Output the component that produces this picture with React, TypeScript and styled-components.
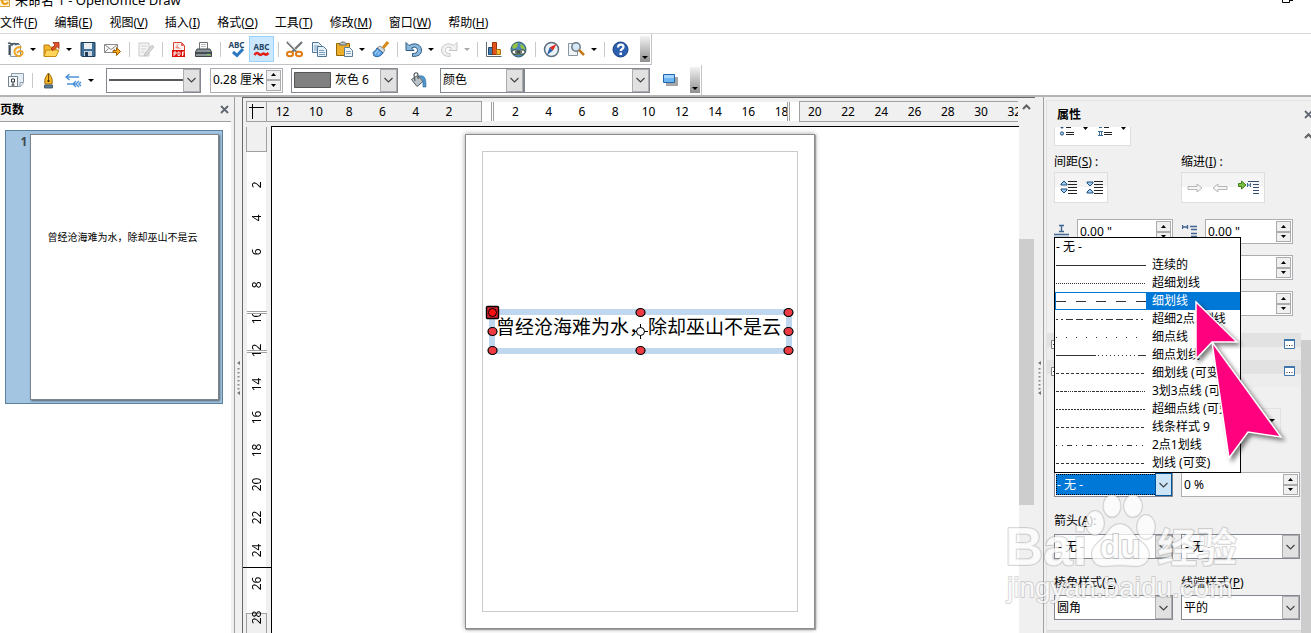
import React from "react";
import styled, { createGlobalStyle, css } from "styled-components";

const GlobalStyle = createGlobalStyle`
  * { box-sizing: border-box; }
  html, body, #root { height: 100%; }
  body { margin: 0; overflow: hidden; background: #fff; }
  body, button, input, select {
    font-family: "Noto Sans", "Noto Sans CJK SC", sans-serif;
    font-size: 12px;
    line-height: 16px;
    color: #000;
  }
  button { padding: 0; border: 0; background: none; }
  svg { display: block; flex: none; }
`;

/* ---------- window frame ---------- */

const Window = styled.div`
  display: flex;
  flex-direction: column;
  height: 100vh;
  overflow: hidden;
`;

const TitleBar = styled.header`
  display: flex;
  align-items: flex-end;
  justify-content: space-between;
  height: 8px;
  padding-right: 18px;
`;

const TitleText = styled.div`
  display: flex;
  align-items: flex-end;
  gap: 5px;
  white-space: nowrap;
  font-size: 13px;
`;

const RestoreButton = styled.button`
  display: flex;
  align-self: flex-start;
`;

const MenuBar = styled.nav`
  display: flex;
  gap: 17px;
  height: 26px;
  align-items: center;
  padding-top: 4px;
  border-bottom: 1px solid #d8d8da;
`;

const MenuItem = styled.button`
  white-space: nowrap;
`;

const ToolBar = styled.div<{ $last?: boolean }>`
  display: flex;
  align-items: center;
  align-self: flex-start;
  height: ${(p) => (p.$last ? 30 : 31)}px;
  padding-left: 3px;
  padding-right: 1px;
  border-right: 1px solid #c4c4c8;
  border-bottom: ${(p) => (p.$last ? "0" : "1px solid #c4c4c8")};
`;

const ToolButton = styled.button<{ $active?: boolean }>`
  display: flex;
  align-items: center;
  justify-content: center;
  width: 25px;
  height: 26px;
  ${(p) =>
    p.$active &&
    css`
      background: #cce8ff;
      border: 1px solid #99d1ff;
    `}
`;

const SplitButton = styled.button`
  display: flex;
  align-items: center;
  width: 36px;
  height: 26px;
  padding-left: 4px;
  gap: 6px;
`;

const Separator = styled.span`
  width: 8px;
  height: 15px;
  flex: none;
  background: linear-gradient(#c9c9c9, #c9c9c9) 4px 0 / 1px 100% no-repeat;
`;

const Grip = styled.button`
  display: flex;
  align-items: flex-end;
  justify-content: center;
  width: 10px;
  height: 26px;
  margin-left: 7px;
  padding-bottom: 3px;
  background: linear-gradient(#f2f2f2, #8f8f8f);
`;

/* ---------- form controls ---------- */

const ComboBox = styled.div<{ $width?: number }>`
  position: relative;
  display: flex;
  width: ${(p) => (p.$width ? p.$width + "px" : "100%")};
  height: 25px;
`;

const ComboSelect = styled.select<{ $indent?: number; $selected?: boolean }>`
  appearance: none;
  width: 100%;
  height: 100%;
  margin: 0;
  padding: 0 20px 0 ${(p) => p.$indent ?? 2}px;
  border: 1px solid #828790;
  border-radius: 0;
  background: #fff;
  outline: 0;
  ${(p) =>
    p.$selected &&
    css`
      color: #fff;
      background: #0078d7;
      box-shadow: inset 0 0 0 1px #fff;
      outline: 1px dotted #000;
      outline-offset: -3px;
    `}
`;

const ComboArrow = styled.span<{ $hot?: boolean }>`
  position: absolute;
  top: 1px;
  right: 1px;
  bottom: 1px;
  width: 17px;
  display: flex;
  align-items: center;
  justify-content: center;
  pointer-events: none;
  background: ${(p) => (p.$hot ? "#cce4f7" : "#e1e1e1")};
  border: 1px solid ${(p) => (p.$hot ? "#005499" : "#adadad")};
`;

const ComboSample = styled.span`
  position: absolute;
  left: 3px;
  top: 0;
  bottom: 0;
  display: flex;
  align-items: center;
  pointer-events: none;
`;

const SpinFrame = styled.div<{ $width?: number }>`
  display: flex;
  width: ${(p) => (p.$width ? p.$width + "px" : "100%")};
  height: 25px;
  padding: 1px;
  border: 1px solid #abadb3;
  background: #fff;
`;

const SpinInput = styled.input`
  flex: 1;
  min-width: 0;
  padding: 0 0 0 1px;
  border: 0;
  outline: 0;
  background: none;
`;

const SpinButtons = styled.div`
  display: flex;
  flex-direction: column;
  width: 15px;
`;

const SpinButton = styled.button`
  display: flex;
  flex: 1;
  align-items: center;
  justify-content: center;
  background: #f0f0f0;
  border: 1px solid #acacac;
`;

/* ---------- work area ---------- */

const WorkArea = styled.main`
  display: flex;
  flex: 1;
  min-height: 0;
  border-top: 2px solid #b4b4b4;
  background: #f0f0f0;
`;

const PagesPanel = styled.section`
  display: flex;
  flex-direction: column;
  width: 235px;
  flex: none;
  padding-right: 3px;
  border-right: 1px solid #a0a0a0;
`;

const PanelHeader = styled.div`
  display: flex;
  align-items: center;
  justify-content: space-between;
  height: 25px;
  padding-top: 1px;
  padding-right: 2px;
  border-bottom: 1px solid #a0a0a0;
  font-weight: bold;
`;

const PageList = styled.div`
  flex: 1;
  padding: 8px 8px 0 5px;
  background: #fff;
`;

const PageItem = styled.button`
  display: flex;
  align-items: flex-start;
  width: 100%;
  height: 274px;
  padding: 3px 3px 3px 14px;
  gap: 2px;
  border: 1px solid #5b7f9f;
  background: #a3c5e2;
  font-weight: bold;
  color: #40484f;
`;

const Thumbnail = styled.span`
  flex: 1;
  height: 266px;
  padding-top: 94px;
  padding-right: 4px;
  border: 1px solid #7d858c;
  box-shadow: 1px 1px 2px #55606a;
  background: #fff;
  font-size: 10px;
  font-weight: normal;
  color: #000;
  text-align: center;
  white-space: nowrap;
`;

const PageNumber = styled.span`
  width: 8px;
`;

const Splitter = styled.div<{ $width: number }>`
  display: flex;
  justify-content: center;
  width: ${(p) => p.$width}px;
  flex: none;
  padding-top: 263px;
`;

const Editor = styled.section`
  display: flex;
  flex: 1;
  min-width: 0;
  border: solid #696969;
  border-width: 1px 0 0 1px;
`;

const EditorMain = styled.div`
  display: flex;
  flex-direction: column;
  flex: 1;
  min-width: 0;
`;

const RulerRow = styled.div`
  display: flex;
  height: 28px;
  padding: 3px 0 4px 3px;
`;

const RulerCorner = styled.div`
  width: 21px;
  height: 21px;
  flex: none;
  border: 1px solid #a0a0a0;
`;

const HRuler = styled.div`
  position: relative;
  display: flex;
  flex: 1;
  min-width: 0;
  margin-right: 1px;
  overflow: hidden;
  background: linear-gradient(#fff, #fff) 0 1px / 100% 19px no-repeat;
`;

const HBand = styled.div<{ $width?: number; $side?: "left" | "right" }>`
  ${(p) => (p.$width ? `width: ${p.$width}px; flex: none;` : "flex: 1;")}
  ${(p) =>
    p.$side &&
    css`
      background: #f0f0f0;
      border: 1px solid #a0a0a0;
      border-${p.$side}: 0;
    `}
`;

const HIndent = styled.div`
  position: relative;
  z-index: 1;
  width: 3px;
  margin: 1px 0;
  flex: none;
  background: #fff;
  border: solid #a0a0a0;
  border-width: 0 1px;
`;

const HLabels = styled.div`
  position: absolute;
  top: 3px;
  left: -1px;
  width: 765px;
  display: grid;
  grid-template-columns: repeat(23, 1fr);
  text-align: center;
`;

const EditorBody = styled.div`
  display: flex;
  flex: 1;
  min-height: 0;
`;

const VRuler = styled.div`
  position: relative;
  display: flex;
  flex-direction: column;
  width: 28px;
  flex: none;
  padding: 1px 4px 0 3px;
  overflow: hidden;
`;

const VBand = styled.div<{ $height?: number; $side?: "top" | "bottom" }>`
  ${(p) => (p.$height ? `height: ${p.$height}px; flex: none;` : "flex: 1;")}
  margin: 0 ${(p) => (p.$side ? 0 : 1)}px;
  background: #fff;
  ${(p) =>
    p.$side &&
    css`
      background: #f0f0f0;
      border: 1px solid #a0a0a0;
      border-${p.$side}: 0;
    `}
`;

const VIndent = styled.div`
  position: relative;
  z-index: 1;
  height: 3px;
  margin-left: 1px;
  flex: none;
  background: #fff;
  border: solid #a0a0a0;
  border-width: 1px 0;
`;

const VLabels = styled.div`
  position: absolute;
  top: 42px;
  left: 6px;
  width: 16px;
  height: 466px;
  display: grid;
  grid-template-rows: repeat(14, 1fr);
`;

const VLabel = styled.span`
  writing-mode: vertical-rl;
  transform: rotate(180deg);
  text-align: center;
  line-height: 16px;
`;

const CursorMark = styled.div`
  position: absolute;
  top: 441px;
  left: 0;
  right: 0;
  height: 1px;
  background: #000;
`;

const Canvas = styled.div`
  position: relative;
  flex: 1;
  min-width: 0;
  overflow: hidden;
  border: solid #000;
  border-width: 1px 0 0 1px;
  background: #fff;
`;

const Sheet = styled.div`
  position: absolute;
  left: 193px;
  top: 7px;
  width: 350px;
  height: 495px;
  padding: 16px;
  border: 1px solid #8c8c8c;
  background: #fff;
  box-shadow: 0 0 5px #a0a0a0, 1px 1px 1px #a0a0a0;
`;

const SheetMargin = styled.div`
  height: 100%;
  border: 1px solid #cacaca;
`;

const TextFrame = styled.div`
  position: absolute;
  left: 217px;
  top: 182px;
  width: 303px;
  height: 45px;
  padding: 0 1px;
  border: 6px solid #bfd7ef;
  font-size: 19px;
  line-height: 24px;
  white-space: nowrap;
`;

const FrameHandles = styled.svg`
  position: absolute;
  left: -6px;
  top: -6px;
  overflow: visible;
`;

const ScrollTrack = styled.div<{ $width: number; $pad: number }>`
  display: flex;
  flex-direction: column;
  width: ${(p) => p.$width}px;
  flex: none;
  padding-top: ${(p) => p.$pad}px;
  background: #f0f0f0;
  overflow: hidden;
`;

const ScrollUp = styled.button`
  display: flex;
  height: 6px;
  padding-left: 3px;
  flex: none;
`;

const ScrollThumb = styled.div<{ $gap: number; $height: number }>`
  width: 15px;
  height: ${(p) => p.$height}px;
  flex: none;
  margin-top: ${(p) => p.$gap}px;
  background: #cdcdcd;
`;

/* ---------- properties sidebar ---------- */

const Sidebar = styled.aside`
  position: relative;
  display: flex;
  flex-direction: column;
  width: 268px;
  flex: none;
  border-left: 1px solid #a0a0a0;
`;

const SidebarHeader = styled.div`
  display: flex;
  align-items: center;
  justify-content: space-between;
  height: 30px;
  flex: none;
  margin: 3px 0 -3px 2px;
  padding: 0 0 2px 10px;
  border: solid #e2e2e2;
  border-width: 1px 0 0 1px;
  overflow: hidden;
`;

const SidebarTitle = styled.h2`
  margin: 0;
  font-size: 12px;
  line-height: 16px;
`;

const SidebarClose = styled.button`
  flex: none;
  margin-right: -2px;
`;

const SidebarScroll = styled.div`
  display: flex;
  flex: 1;
  min-height: 0;
`;

const SidebarBody = styled.div`
  flex: 1;
  min-width: 0;
  margin-left: 2px;
  border-left: 1px solid #e2e2e2;
  overflow: hidden;
`;

const Row = styled.div<{ $top: number }>`
  display: grid;
  grid-template-columns: 119px 119px;
  column-gap: 8px;
  margin-top: ${(p) => p.$top}px;
  padding-left: 7px;
`;

const Caption = styled.label`
  white-space: nowrap;
`;

const IconGroup = styled.div<{ $width: number; $cut?: boolean }>`
  display: flex;
  align-items: center;
  justify-content: space-around;
  width: ${(p) => p.$width}px;
  height: ${(p) => (p.$cut ? 19 : 31)}px;
  border: 1px solid #dedede;
  ${(p) =>
    p.$cut
      ? css`
          border-top: 0;
          align-items: flex-start;
          background: #fff;
        `
      : css`
          background: linear-gradient(#f4f4f4 50%, #fff 50%);
        `}
`;

const IconButton = styled.button`
  display: flex;
  align-items: flex-start;
  gap: 9px;
`;

const MeasureField = styled.label`
  display: flex;
  align-items: center;
  justify-content: space-between;
`;

const IndentField = styled(MeasureField)`
  width: 112px;
  padding-left: 1px;
`;

const SectionGroup = styled.div`
  margin-top: 17px;
`;

const Section = styled.div`
  display: flex;
  align-items: center;
  justify-content: space-between;
  height: 27px;
  padding: 0 6px 5px 4px;
  background: linear-gradient(#e2e2e2 14px, #ededed 14px);
`;

const StyleButton = styled.button`
  display: flex;
  align-items: center;
  justify-content: flex-end;
  width: 100px;
  height: 25px;
  padding-right: 5px;
  border: 1px solid #e2e2e2;
`;

const PanelEnd = styled.div`
  height: 20px;
  margin-top: 10px;
  border-top: 1px solid #d6d6d6;
  background: #e2e2e2;
`;

const DropDown = styled.ul`
  position: absolute;
  top: 140px;
  left: 10px;
  width: 187px;
  margin: 0;
  padding: 0;
  list-style: none;
  border: 1px solid #000;
  background: #fff;
`;

const Option = styled.li<{ $selected?: boolean }>`
  display: flex;
  align-items: center;
  gap: 6px;
  height: 18px;
  padding-left: 1px;
  white-space: nowrap;
  color: ${(p) => (p.$selected ? "#fff" : "#000")};
  background: ${(p) => (p.$selected ? "#0078d7" : "transparent")};
`;

const Sample = styled.svg`
  background: #fff;
`;

const Pointer = styled.svg`
  position: absolute;
  top: 193px;
  left: 140px;
  filter: drop-shadow(3px 3px 2px rgba(0, 0, 0, 0.5));
`;

const Watermark = styled.svg`
  position: absolute;
  top: 393px;
  left: -43px;
  pointer-events: none;
`;

/* ---------- small drawings ---------- */

const Caret = ({ up, color = "#000", size = 5 }: { up?: boolean; color?: string; size?: number }) => (
  <svg width={size} height="3" viewBox="0 0 6 3" preserveAspectRatio="none">
    <path d={up ? "M0 3h6L3 0z" : "M0 0h6L3 3z"} fill={color} />
  </svg>
);

const Chevron = ({ up }: { up?: boolean }) => (
  <svg width="9" height="6" viewBox="0 0 9 6" fill="none" stroke={up ? "#606060" : "#404040"}>
    <path d={up ? "M1 5l3.500-3.500L8 5" : "M.5 1l4 4 4-4"} strokeWidth={up ? 2 : 1.1} />
  </svg>
);

const Cross = () => (
  <svg width="9" height="9" viewBox="0 0 9 9">
    <path d="M1 1l7 7M8 1L1 8" stroke="#5d6670" strokeWidth="1.800" />
  </svg>
);

const SplitDots = () => (
  <svg width="3" height="36" viewBox="0 0 3 36">
    <path d="M3 1v4L0 3zM3 31v4l-3-2z" fill="#777" />
    <path d="M1.500 8v22" stroke="#888" strokeWidth="2" strokeDasharray="1.500 2.500" />
  </svg>
);

const glyphs: Record<string, React.ReactNode> = {
  new: (
    <>
      <path d="M3.500 2.500h8l2 2v11h-10z" fill="#f4f7f9" stroke="#8b98a3" />
      <path d="M1 2.500c2-1 3 0 4 1.500 1-1.500 3-2 4-.5 1-1 2-1 3 0" fill="none" stroke="#4a5a66" strokeWidth="1.600" />
      <path d="M2.500 4v10" stroke="#3f4d59" strokeWidth="2" />
      <path d="M14.500 6.500c-4-1-7 1-7 4s2.500 5 5 4.500 4-3 2.500-4.500-4 0-5 1.500" fill="none" stroke="#f0a31c" strokeWidth="1.900" />
    </>
  ),
  open: (
    <>
      <path d="M1 4h5l1 2h6v9H1z" fill="#f7b72d" stroke="#b97b06" />
      <path d="M3 9h13l-3 6.500H1z" fill="#ffd65a" stroke="#c68b10" />
      <path d="M8 8l4-4-2-2.500h6v6L14 5.500l-4 4z" fill="#e2522b" stroke="#9a2a10" strokeWidth=".8" />
    </>
  ),
  save: (
    <>
      <path d="M2 1.500h14v14H3l-1-1z" fill="#3f6f97" stroke="#1f3d59" />
      <path d="M5 2h8v6H5z" fill="#e8eef3" />
      <path d="M5 10h8v5H5z" fill="#c9d6e0" />
      <path d="M6 11h3v4H6z" fill="#1f3d59" />
    </>
  ),
  mail: (
    <>
      <path d="M.5 3.500h13v8H.5z" fill="#fafafa" stroke="#8b8b8b" />
      <path d="M.5 3.500l6.500 5 6.500-5M.5 11.500l4-4M13.500 11.500l-4-4" fill="none" stroke="#8b8b8b" />
      <path d="M9 9.500h3.500v-3l4 4-4 4v-3H9z" fill="#f5a623" stroke="#a05f00" />
    </>
  ),
  edit: (
    <>
      <path d="M2 2h10v13H2z" fill="#f5f5f5" stroke="#c8c8c8" />
      <path d="M4 5h6M4 8h5M4 11h3" stroke="#d0d0d0" />
      <path d="M15 4l-7 8-1 3 3-1 7-8z" fill="#d8d8d8" stroke="#bbb" strokeWidth=".8" />
    </>
  ),
  pdf: (
    <>
      <path d="M3.500 1.500h8l3 3v11h-11z" fill="#fdf2f0" stroke="#d94030" />
      <path d="M11 1.500v3.500h3.500z" fill="#e2685a" />
      <path d="M6 4l5 4-6-1 4-4z" fill="#f08a7a" />
      <path d="M2 9h13v7H2z" fill="#d9150c" />
      <path d="M4 15v-4h2v2H4M8 11v3.500h1.500L10 14v-2.500L9.500 11zM12.500 15v-4h2M12.500 13H14" fill="none" stroke="#fff" />
    </>
  ),
  print: (
    <>
      <path d="M4.500 1.500h8v7h-8z" fill="#fff" stroke="#6d7478" />
      <path d="M6 3.500h5M6 5.500h5" stroke="#c0c0c0" />
      <path d="M2 8h13l1.500 3v4.500H.5V11z" fill="#8b9499" stroke="#3d4549" />
      <path d="M1 11h15v2H1z" fill="#454d52" />
      <path d="M12 13.500h3" stroke="#7fe03e" />
    </>
  ),
  spell: <path d="M5 11l4 3.500 6-6.500" fill="none" stroke="#2b78c2" strokeWidth="3" />,
  wave: <path d="M1.500 14c2-3 3-2 5-.5s3-2 5-.5 3 0 4-1" fill="none" stroke="#e2201a" strokeWidth="2.600" />,
  cut: (
    <>
      <path d="M1 1l10 10M16 1L6 11" stroke="#6f7477" strokeWidth="2.200" />
      <path d="M2 1l9 9" stroke="#d0d3d5" />
      <ellipse cx="4" cy="13" rx="3" ry="2.200" fill="none" stroke="#e07b12" strokeWidth="2" />
      <ellipse cx="13" cy="13" rx="3" ry="2.200" fill="none" stroke="#e07b12" strokeWidth="2" />
    </>
  ),
  copy: (
    <>
      <path d="M1.500 1.500h6l3 3v7h-9z" fill="#e6f0f8" stroke="#4f7596" />
      <path d="M3 5h5M3 7h5M3 9h3" stroke="#7fa3c0" />
      <path d="M6.500 5.500h6l3 3v7h-9z" fill="#e6f0f8" stroke="#4f7596" />
      <path d="M8 9.500h5M8 11.500h6M8 13.500h6" stroke="#7fa3c0" />
    </>
  ),
  paste: (
    <>
      <path d="M.5 2.500h13v12H.5z" fill="#eeb028" stroke="#96660a" />
      <path d="M3.500 4c0-4 7-4 7 0z" fill="#bfc5c9" stroke="#5f686e" />
      <path d="M8.500 6.500h5l3 3v6h-8z" fill="#edf4fa" stroke="#5a7c99" />
      <path d="M10 10.500h5M10 12.500h5" stroke="#7fa3c0" />
    </>
  ),
  brush: (
    <>
      <path d="M16 1l-5 6" stroke="#d88a1d" strokeWidth="3" />
      <path d="M8 5l5 4-2 3-6-5z" fill="#d5d9dc" stroke="#6f7a82" strokeWidth=".8" />
      <path d="M5 7l6 5c-3 4-6 4.500-9.500 2.500 1-1-1-1.500-.5-3 1-1 3-2 4-4.500z" fill="#5ea3e6" stroke="#265f9c" />
      <path d="M3 13l3-4M6 13.500l2-3" stroke="#b9dcfa" />
    </>
  ),
  undo: (
    <path d="M1 1.500v8h8L6.500 7c4-2 6 0 6 2.500S10 12.500 7.500 12.500v3c6 0 9-2 9-6.500S10.500.5 4 4.500z" fill="#8ab8dc" stroke="#2f5a80" />
  ),
  redo: (
    <path d="M16 1.500v8H8L10.500 7c-4-2-6 0-6 2.500s2 3 4.500 3v3C4 15.500.5 13.500.5 9S6.500.5 13 4.500z" fill="#f1f1f1" stroke="#c6c6c6" />
  ),
  chart: (
    <>
      <path d="M1.500 1v14.500H16.500" fill="none" stroke="#5b6a76" />
      <path d="M3.500 6.500h4v7h-4z" fill="#3f76ab" stroke="#214a70" />
      <path d="M7.500 1.500h4v12h-4z" fill="#e2561d" stroke="#963108" />
      <path d="M11.500 8.500h4v5h-4z" fill="#f5b83a" stroke="#a87008" />
    </>
  ),
  globe: (
    <>
      <circle cx="8.500" cy="8.500" r="7.500" fill="#4f88b8" stroke="#2f5f6a" />
      <path d="M2 6c2-4 5-4 6-4l-1 4-3 2zM10 3c4 1 5 4 5 6l-4-2z" fill="#9bc53a" />
      <path d="M1.500 9h14l-2 5h-10z" fill="#5f7b60" />
      <rect x="2" y="9" width="6" height="4" rx="2" fill="#fff" stroke="#39453b" />
      <rect x="9" y="9" width="6" height="4" rx="2" fill="#fff" stroke="#39453b" />
      <path d="M5 11h7" stroke="#39453b" strokeWidth="1.500" />
    </>
  ),
  compass: (
    <>
      <circle cx="8.500" cy="8.500" r="7" fill="#e9f2f9" stroke="#5c6e7d" strokeWidth="1.500" />
      <path d="M13.500 3L6.500 6.500l3.500 3z" fill="#e2261a" />
      <path d="M4 14l2.500-7.500 3.500 3z" fill="#2d62a6" />
    </>
  ),
  zoom: (
    <>
      <path d="M.5 2.500h9v12h-9z" fill="#f1f5f8" stroke="#8796a3" />
      <circle cx="8" cy="6" r="4.200" fill="#d4e8f7" stroke="#6d7b86" strokeWidth="1.500" />
      <path d="M11 9l5 5" stroke="#c47a1c" strokeWidth="2.500" />
    </>
  ),
  help: (
    <>
      <circle cx="8.500" cy="8.500" r="7.500" fill="#2c5fae" stroke="#173f80" />
      <path d="M6 6.500c0-4 5.500-3.500 5.500-.5 0 2-2.800 2-2.800 4" fill="none" stroke="#fff" strokeWidth="2.200" />
      <path d="M7.500 11.500h2.500v2.500H7.500z" fill="#fff" />
    </>
  ),
  styles: (
    <>
      <path d="M4.500 1.500h12v9l-3 4h-9z" fill="#e6eef5" stroke="#8d9caa" />
      <path d="M13 14v-3.500h3" fill="#fff" stroke="#8d9caa" />
      <path d="M1.500 4.500h9v10h-9z" fill="#fafafa" stroke="#70808d" />
      <path d="M4.500 7h3v3h-3zM6 10v3.500M4.500 13h3" fill="none" stroke="#333d45" />
    </>
  ),
  pen: (
    <>
      <path d="M8.500 1C6 4 4 7 5 12h7c1-5-1-8-3.500-11z" fill="#f9b826" stroke="#95640a" />
      <path d="M8.500 2v7" stroke="#6f4a06" />
      <path d="M8.500 8v2" stroke="#4a3000" strokeWidth="2" />
      <path d="M4.500 13h8v3h-8z" fill="#5d7f99" stroke="#2d4a61" strokeWidth=".8" />
    </>
  ),
  arrows: (
    <path
      d="M1 5h13M4.500 2L1 5l3.500 3M2 12h9M14 9l-3 3 3 3M11 9l-3 3 3 3M16 10l-2 2 2 2"
      fill="none"
      stroke="#4a92da"
      strokeWidth="1.400"
    />
  ),
  bucket: (
    <>
      <path d="M1.500 7.500l6-4 5.500 6-6 5z" fill="#bcc3c7" stroke="#4d575e" />
      <path d="M5 9L4 3c0-3 4-3 4 0v4" fill="none" stroke="#4d575e" strokeWidth="1.200" />
      <path d="M9 4c6-1 7 2 7 11h-3c0-6 0-8-2-9z" fill="#4f97cf" stroke="#2b6799" strokeWidth=".6" />
    </>
  ),
  shadow: (
    <>
      <path d="M4 5h12v9H4z" fill="#a6a6a6" />
      <path d="M1.500 2.500h11v8h-11z" fill="#6eb6f2" stroke="#2366ad" />
      <path d="M2 3h10v3H2z" fill="#a4d4fa" />
    </>
  ),
};

const Glyph = ({ name }: { name: string }) => (
  <svg width="17" height="17" viewBox="0 0 17 17">
    {glyphs[name]}
    {(name === "spell" || name === "wave") && (
      <text x="8.500" y={name === "spell" ? 6.5 : 8.5} textAnchor="middle" fontSize="8" fontWeight="700" fill="#24445f">
        ABC
      </text>
    )}
  </svg>
);

const Bullets = ({ numbered }: { numbered?: boolean }) => (
  <svg width="15" height="10" viewBox="0 0 15 10">
    <path d="M7 .5h5M7 5.500h8M7 7.500h8" stroke="#222" />
    {numbered ? (
      <path d="M1 4.500h5M1 8.500h5M2.500 4.500v4M4.500 4.500v4M2 .5h3" stroke="#3f6f97" />
    ) : (
      <>
        <circle cx="3" cy="6.500" r="1.600" fill="#a9cdec" stroke="#1f4f7a" />
        <circle cx="3" cy="0" r="1.500" fill="#1f4f7a" />
      </>
    )}
  </svg>
);

const Spacing = ({ tight }: { tight?: boolean }) => (
  <svg width="17" height="15" viewBox="0 0 17 15">
    <path d="M8 1.500h9M8 4.500h9M8 7.500h9M8 10.500h9M8 13.500h9" stroke="#222" strokeWidth="1.200" />
    <path
      d={tight ? "M1 2h6v1L4 6 1 3zM1 13h6v-1L4 9l-3 3z" : "M1 5h6V4L4 1 1 4zM1 9h6v1l-3 3-3-3z"}
      fill="#9ccaf2"
      stroke="#1f4f7a"
    />
  </svg>
);

const IndentArrow = ({ left }: { left?: boolean }) => (
  <svg width="16" height="10" viewBox="0 0 16 10">
    <path
      d={left ? "M15 3.500H6V1L1 5l5 4V6.500h9z" : "M1 3.500h9V1l5 4-5 4V6.500H1z"}
      fill="#f6f6f6"
      stroke="#b5b5b5"
    />
  </svg>
);

const HangingIndent = () => (
  <svg width="21" height="16" viewBox="0 0 21 16">
    <path d="M.5 3.500h3V1l4.500 4-4.500 4V6.500h-3z" fill="#7bc043" stroke="#3f7d15" />
    <path d="M9.500 3v4M9.500 5h3M12.500 3v4" stroke="#3f6f97" />
    <path d="M10 1.500h11M15 4.500h6M15 7.500h6M15 10.500h6M15 13.500h6" stroke="#35506a" strokeWidth="1.200" />
  </svg>
);

const MeasureIcon = ({ side }: { side: "above" | "before" }) => (
  <svg width="15" height="15" viewBox="0 0 15 15">
    {side === "above" ? (
      <path d="M5 1.500h5M7.500 1.500v6M5 7.500h5M0 10.500h15M0 13.500h15" stroke="#3f6593" strokeWidth="1.400" />
    ) : (
      <path d="M.5 1v4M.5 3h5M5.500 1v4M8 2.500h7M9 5.500h6M9 9.500h6M9 12.500h6" stroke="#3f6593" strokeWidth="1.400" />
    )}
  </svg>
);

const MoreOptions = () => (
  <svg width="11" height="10" viewBox="0 0 11 10">
    <path d="M.5.5h10v9H.5z" fill="#fff" stroke="#3f76ab" />
    <path d="M0 1h11" stroke="#3f76ab" strokeWidth="2" />
    <path d="M2.500 6.500h6" stroke="#333" strokeDasharray="1 1.500" />
  </svg>
);

const Expander = () => (
  <svg width="9" height="9" viewBox="0 0 9 9">
    <path d="M.5.5h8v8h-8z" fill="#fff" stroke="#808080" />
    <path d="M2 4.500h5" stroke="#333" />
  </svg>
);

/* ---------- composite controls ---------- */

const Combo = ({
  label,
  value,
  width,
  indent,
  hot,
  children,
}: {
  label: string;
  value: string;
  width?: number;
  indent?: number;
  hot?: boolean;
  children?: React.ReactNode;
}) => (
  <ComboBox $width={width}>
    <ComboSelect aria-label={label} $indent={indent} $selected={hot} defaultValue={value}>
      <option value={value}>{value}</option>
    </ComboSelect>
    {children && <ComboSample>{children}</ComboSample>}
    <ComboArrow $hot={hot}>
      <Chevron />
    </ComboArrow>
  </ComboBox>
);

const Spinner = ({ label, value, width }: { label: string; value: string; width?: number }) => (
  <SpinFrame $width={width}>
    <SpinInput aria-label={label} defaultValue={value} />
    <SpinButtons>
      <SpinButton aria-label="+">
        <Caret up />
      </SpinButton>
      <SpinButton aria-label="-">
        <Caret />
      </SpinButton>
    </SpinButtons>
  </SpinFrame>
);

const ScrollButtonUp = () => (
  <ScrollUp aria-label="scroll up">
    <Chevron up />
  </ScrollUp>
);

type Tool = { icon?: string; split?: boolean; active?: boolean; disabled?: boolean };

const sep: Tool = {};
const standardTools: Tool[] = [
  { icon: "new", split: true },
  { icon: "open", split: true },
  { icon: "save" },
  { icon: "mail" },
  sep,
  { icon: "edit", disabled: true },
  sep,
  { icon: "pdf" },
  { icon: "print" },
  sep,
  { icon: "spell" },
  { icon: "wave", active: true },
  sep,
  { icon: "cut" },
  { icon: "copy" },
  { icon: "paste", split: true },
  { icon: "brush" },
  sep,
  { icon: "undo", split: true },
  { icon: "redo", split: true, disabled: true },
  sep,
  { icon: "chart" },
  { icon: "globe" },
  sep,
  { icon: "compass" },
  { icon: "zoom", split: true },
  sep,
  { icon: "help" },
];

const ToolItem = ({ tool }: { tool: Tool }) => {
  if (!tool.icon) return <Separator />;
  if (tool.split)
    return (
      <SplitButton aria-label={tool.icon} disabled={tool.disabled}>
        <Glyph name={tool.icon} />
        <Caret color={tool.disabled ? "#a8a8a8" : "#000"} size={6} />
      </SplitButton>
    );
  return (
    <ToolButton aria-label={tool.icon} $active={tool.active} disabled={tool.disabled}>
      <Glyph name={tool.icon} />
    </ToolButton>
  );
};

const Field = styled.div<{ $left: number }>`
  display: flex;
  margin-left: ${(p) => p.$left}px;
`;

const menus: [string, string][] = [
  ["文件", "F"],
  ["编辑", "E"],
  ["视图", "V"],
  ["插入", "I"],
  ["格式", "O"],
  ["工具", "T"],
  ["修改", "M"],
  ["窗口", "W"],
  ["帮助", "H"],
];

const hLabels = ["12", "10", "8", "6", "4", "2", ""].concat(
  Array.from({ length: 16 }, (_, i) => String((i + 1) * 2))
);
const vLabels = Array.from({ length: 14 }, (_, i) => String((i + 1) * 2));

const lineStyles: { name: string; dash?: string }[] = [
  { name: "连续的" },
  { name: "超细划线", dash: "1 1" },
  { name: "细划线", dash: "10 10" },
  { name: "超细2点3划线", dash: "2 3 2 3 7 3 7 3 7 3" },
  { name: "细点线", dash: "1 9" },
  { name: "细点划线", dash: "40 2 1 3 1 3 1 3 1 3 1 3 1 3 1 3 1 3 1 3 1 3 7 0" },
  { name: "细划线 (可变)", dash: "3 2" },
  { name: "3划3点线 (可变)", dash: "3 1 3 1 3 1 1 1 1 1 1 1" },
  { name: "超细点线 (可变)", dash: "2 1" },
  { name: "线条样式 9", dash: "3 2" },
  { name: "2点1划线", dash: "1 5 1 4 5 4" },
  { name: "划线 (可变)", dash: "3 2" },
];

const quote = "曾经沧海难为水，除却巫山不是云";

const Handle = ({ x, y }: { x: number; y: number }) => (
  <ellipse cx={x} cy={y} rx="4.500" ry="4" fill="#ee3a43" stroke="#000" strokeWidth="1.200" />
);

const Mnemonic = ({ text, letter, tail = "" }: { text: string; letter: string; tail?: string }) => (
  <>
    {text}(<u>{letter}</u>){tail}
  </>
);

export default function App() {
  return (
    <Window lang="zh-CN">
      <GlobalStyle />
      <TitleBar>
        <TitleText>
          <svg width="10" height="8" viewBox="0 0 10 8">
            <path d="M-1 0H9.500v6.500H-1z" fill="#fff3d6" stroke="#d9a032" />
            <path d="M2 0c0 5 5 5 6 2" fill="none" stroke="#ee9a12" strokeWidth="2" />
          </svg>
          未命名 1 - OpenOffice Draw
        </TitleText>
        <RestoreButton aria-label="restore">
          <svg width="11" height="3" viewBox="0 0 11 3">
            <path d="M.5 0v2.500h7V0M8 .5h3" fill="none" stroke="#000" />
          </svg>
        </RestoreButton>
      </TitleBar>

      <MenuBar>
        {menus.map(([text, letter]) => (
          <MenuItem key={letter}>
            <Mnemonic text={text} letter={letter} />
          </MenuItem>
        ))}
      </MenuBar>

      <ToolBar>
        {standardTools.map((tool, i) => (
          <ToolItem key={i} tool={tool} />
        ))}
        <Grip aria-label="toolbar options">
          <Caret size={6} />
        </Grip>
      </ToolBar>

      <ToolBar $last>
        <ToolItem tool={{ icon: "styles" }} />
        <Separator />
        <ToolItem tool={{ icon: "pen" }} />
        <ToolItem tool={{ icon: "arrows", split: true }} />
        <Field $left={9}>
          <Combo label="line style" value="" width={95}>
            <svg width="75" height="2">
              <path d="M0 1h75" stroke="#222" strokeWidth="1.500" />
            </svg>
          </Combo>
        </Field>
        <Field $left={9}>
          <Spinner label="line width" value="0.28 厘米" width={73} />
        </Field>
        <Field $left={8}>
          <Combo label="line color" value="灰色 6" width={107} indent={43}>
            <svg width="37" height="16">
              <path d="M.5.5h36v15H.5z" fill="#808080" stroke="#555" />
            </svg>
          </Combo>
        </Field>
        <Field $left={8}>
          <ToolItem tool={{ icon: "bucket" }} />
        </Field>
        <Field $left={9}>
          <Combo label="fill type" value="颜色" width={84} />
          <Combo label="fill color" value="" width={126} />
        </Field>
        <Field $left={8}>
          <ToolItem tool={{ icon: "shadow" }} />
        </Field>
        <Grip aria-label="toolbar options">
          <Caret size={6} />
        </Grip>
      </ToolBar>

      <WorkArea>
        <PagesPanel>
          <PanelHeader>
            页数
            <button aria-label="close pages">
              <Cross />
            </button>
          </PanelHeader>
          <PageList>
            <PageItem>
              <PageNumber>1</PageNumber>
              <Thumbnail>{quote}</Thumbnail>
            </PageItem>
          </PageList>
        </PagesPanel>
        <Splitter $width={7}>
          <SplitDots />
        </Splitter>

        <Editor>
          <EditorMain>
            <RulerRow>
              <RulerCorner>
                <svg width="19" height="19" viewBox="0 0 19 19">
                  <path d="M2 5.500h15M5.500 2v15" stroke="#000" />
                </svg>
              </RulerCorner>
              <HRuler>
                <HBand $width={215} $side="left" />
                <HBand $width={9} />
                <HIndent />
                <HBand $width={293} />
                <HIndent />
                <HBand $width={9} />
                <HBand $side="right" />
                <HLabels>
                  {hLabels.map((n, i) => (
                    <span key={i}>{n}</span>
                  ))}
                </HLabels>
              </HRuler>
            </RulerRow>
            <EditorBody>
              <VRuler>
                <VBand $height={25} $side="top" />
                <VBand $height={159} />
                <VIndent />
                <VBand $height={36} />
                <VIndent />
                <VBand $height={260} />
                <VBand $side="bottom" />
                <VLabels>
                  {vLabels.map((n) => (
                    <VLabel key={n}>{n}</VLabel>
                  ))}
                </VLabels>
                <CursorMark />
              </VRuler>
              <Canvas>
                <Sheet>
                  <SheetMargin />
                </Sheet>
                <TextFrame>
                  {quote}
                  <FrameHandles width="303" height="45" viewBox="0 0 303 45">
                    <rect x="-2.500" y="-2.500" width="12" height="12" rx="1" fill="#d3222c" stroke="#000" strokeWidth="1.400" />
                    <circle cx="3.500" cy="3.500" r="4" fill="#ff1010" stroke="#000" />
                    <Handle x={151.5} y={3.5} />
                    <Handle x={299.5} y={3.5} />
                    <Handle x={3.5} y={22.5} />
                    <Handle x={299.5} y={22.5} />
                    <Handle x={3.5} y={41.5} />
                    <Handle x={151.5} y={41.5} />
                    <Handle x={299.5} y={41.5} />
                    <circle cx="151.500" cy="22.500" r="4" fill="#fff" stroke="#000" />
                    <path d="M151.500 15v4M151.500 26v4M144 22.500h4M155 22.500h4" stroke="#000" />
                  </FrameHandles>
                </TextFrame>
              </Canvas>
            </EditorBody>
          </EditorMain>
          <ScrollTrack $width={16} $pad={6}>
            <ScrollButtonUp />
            <ScrollThumb $gap={129} $height={266} />
          </ScrollTrack>
        </Editor>
        <Splitter $width={8}>
          <SplitDots />
        </Splitter>

        <Sidebar>
          <SidebarHeader>
            <SidebarTitle>属性</SidebarTitle>
            <SidebarClose aria-label="close sidebar">
              <Cross />
            </SidebarClose>
          </SidebarHeader>
          <SidebarScroll>
            <SidebarBody>
              <Row $top={0}>
                <IconGroup $width={77} $cut>
                  <IconButton aria-label="bullets">
                    <Bullets />
                    <Caret />
                  </IconButton>
                  <IconButton aria-label="numbering">
                    <Bullets numbered />
                    <Caret />
                  </IconButton>
                </IconGroup>
              </Row>
              <Row $top={8}>
                <Caption>
                  <Mnemonic text="间距" letter="S" tail=" :" />
                </Caption>
                <Caption>
                  <Mnemonic text="缩进" letter="I" tail=" :" />
                </Caption>
              </Row>
              <Row $top={2}>
                <IconGroup $width={54}>
                  <IconButton aria-label="increase spacing">
                    <Spacing />
                  </IconButton>
                  <IconButton aria-label="decrease spacing">
                    <Spacing tight />
                  </IconButton>
                </IconGroup>
                <IconGroup $width={84}>
                  <IconButton aria-label="increase indent">
                    <IndentArrow />
                  </IconButton>
                  <IconButton aria-label="decrease indent">
                    <IndentArrow left />
                  </IconButton>
                  <IconButton aria-label="hanging indent">
                    <HangingIndent />
                  </IconButton>
                </IconGroup>
              </Row>
              <Row $top={16}>
                <MeasureField>
                  <MeasureIcon side="above" />
                  <Spinner label="above" value={'0.00 "'} width={96} />
                </MeasureField>
                <IndentField>
                  <MeasureIcon side="before" />
                  <Spinner label="before" value={'0.00 "'} width={88} />
                </IndentField>
              </Row>
              {["after", "first line"].map((name) => (
                <Row $top={11} key={name}>
                  <span />
                  <IndentField>
                    <MeasureIcon side="before" />
                    <Spinner label={name} value="" width={88} />
                  </IndentField>
                </Row>
              ))}
              <SectionGroup>
                {["area", "line"].map((name) => (
                  <Section key={name}>
                    <Expander />
                    <button aria-label={name}>
                      <MoreOptions />
                    </button>
                  </Section>
                ))}
              </SectionGroup>
              <Row $top={21}>
                <span />
                <StyleButton aria-label="line width">
                  <Caret size={6} />
                </StyleButton>
              </Row>
              <Row $top={39}>
                <Combo label="style" value="- 无 -" hot />
                <Spinner label="transparency" value="0 %" />
              </Row>
              <Row $top={16}>
                <Caption>
                  <Mnemonic text="箭头" letter="A" tail=":" />
                </Caption>
              </Row>
              <Row $top={5}>
                <Combo label="arrow start" value="- 无 -" indent={3} />
                <Combo label="arrow end" value="- 无 -" indent={3} />
              </Row>
              <Row $top={16}>
                <Caption>
                  <Mnemonic text="棱角样式" letter="C" />
                </Caption>
                <Caption>
                  <Mnemonic text="线端样式" letter="P" />
                </Caption>
              </Row>
              <Row $top={4}>
                <Combo label="corner style" value="圆角" />
                <Combo label="cap style" value="平的" />
              </Row>
              <PanelEnd />
            </SidebarBody>
            <ScrollTrack $width={10} $pad={6}>
              <ScrollButtonUp />
              <ScrollThumb $gap={201} $height={400} />
            </ScrollTrack>
          </SidebarScroll>

          <DropDown role="listbox">
            <Option role="option">- 无 -</Option>
            {lineStyles.map(({ name, dash }) => (
              <Option key={name} role="option" $selected={name === "细划线"}>
                <Sample width="90" height="16">
                  <path d="M0 8.500h90" stroke="#333" strokeWidth="1.200" strokeDasharray={dash} />
                </Sample>
                {name}
              </Option>
            ))}
          </DropDown>

          <Pointer width="110" height="175" viewBox="1184 290 110 175">
            <g fill="#ff007f" stroke="#fff" strokeWidth="1.500">
              <path d="M1212 342L1281 437 1248 432 1229 458z" />
              <path d="M1196 302L1237 342H1212L1196 359z" />
            </g>
          </Pointer>

          <Watermark width="250" height="120" viewBox="1000 490 250 120">
            <g
              fill="#fff"
              fillOpacity=".75"
              stroke="#777"
              strokeOpacity=".28"
              strokeWidth="2"
              strokeLinejoin="round"
              paintOrder="stroke"
              fontFamily="Liberation Sans, Noto Sans CJK SC, sans-serif"
              fontWeight="700"
            >
              <text x="1004" y="565" fontSize="53">
                Bai
              </text>
              <ellipse cx="1094" cy="523" rx="9" ry="12" />
              <ellipse cx="1111" cy="506" rx="8.500" ry="11" />
              <ellipse cx="1132" cy="506" rx="9" ry="11" />
              <ellipse cx="1145" cy="527" rx="9" ry="12" />
              <path d="M1119 524c-9 0-12 9-18 15-6 5-11 10-10 17 1 8 7 11 15 10 9-1 17-1 26 0 9 1 15-3 16-11 0-7-5-11-11-16-6-6-9-15-18-15z" />
              <text x="1099" y="558" fontSize="33" fillOpacity=".9" strokeOpacity=".4">
                du
              </text>
              <text x="1156" y="562" fontSize="40">
                经验
              </text>
              <text x="1006" y="597" fontSize="28" fontWeight="400" fillOpacity=".85">
                jingyan.baidu.com
              </text>
            </g>
          </Watermark>
        </Sidebar>
      </WorkArea>
    </Window>
  );
}
